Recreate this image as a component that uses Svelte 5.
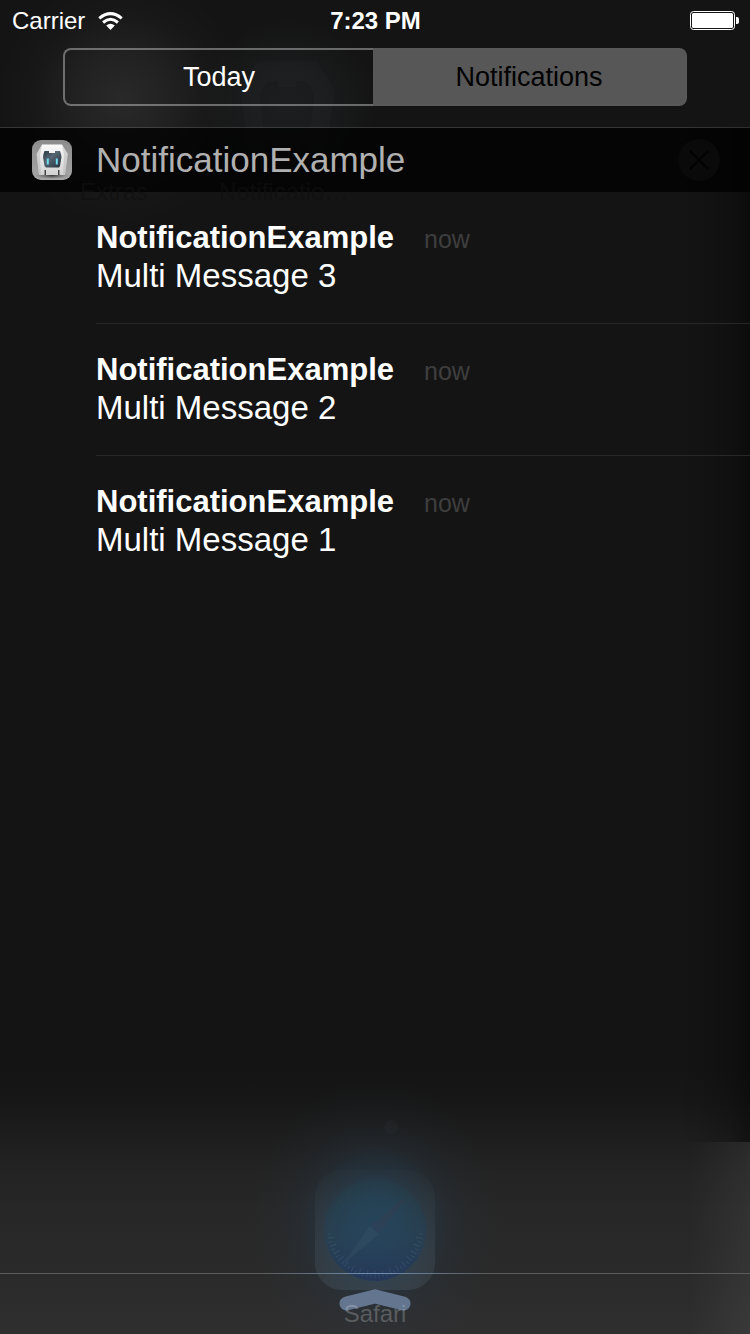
<script>
  let tab = $state('notifications');
  const app = 'NotificationExample';
  let messages = $state(['Multi Message 3', 'Multi Message 2', 'Multi Message 1']);
  const ticks = Array.from({ length: 72 }, (_, i) => i * 5);
</script>

<div class="screen">
  <div class="wallpaper" aria-hidden="true">
    <svg class="ghost-app" viewBox="0 0 40 40">
      <path fill-rule="evenodd" d="M10 4.500h20L36 14 33 35h-6v-4h-2v4H15v-4h-2v4H7L4.500 14zM12 13l2-2h3v2h6v-2h3l2 2 1 3-1 10-2 2H14l-2-2-1-10z" />
    </svg>
    <div class="safari-glow"></div>
    <svg class="safari" viewBox="0 0 120 120">
      <defs>
        <linearGradient id="tile" x1="0" y1="0" x2="0" y2="1">
          <stop offset="0" stop-color="#fff" stop-opacity="0.01" />
          <stop offset="1" stop-color="#c8e6ff" stop-opacity="0.08" />
        </linearGradient>
        <linearGradient id="dial" x1="0" y1="0" x2="0" y2="1">
          <stop offset="0" stop-color="#1f4550" stop-opacity="0.2" />
          <stop offset="0.6" stop-color="#21405a" stop-opacity="0.5" />
          <stop offset="1" stop-color="#25385a" />
        </linearGradient>
      </defs>
      <rect width="120" height="120" rx="27" fill="url(#tile)" />
      <circle cx="60" cy="60" r="51" fill="url(#dial)" />
      <g stroke="#7fa3c0">
        {#each ticks as angle, i}
          <path d={i % 2 ? 'M60 104v4' : 'M60 101v7'} stroke-opacity={angle < 90 || angle > 270 ? 0.15 : 0.03} transform="rotate({angle} 60 60)" />
        {/each}
      </g>
      <path d="M26 96L55 56l9 8z" fill="#7b9aa5" fill-opacity="0.08" />
      <path d="M94 24L55 56l9 8z" fill="#5b3048" fill-opacity="0.13" />
    </svg>
  </div>

  <header class="status">
    <div class="carrier">
      <span>Carrier</span>
      <svg width="25" height="18" viewBox="0 0 25 18" aria-label="Wi-Fi">
        <path d="M1.3 6.3Q12.5-3.1 23.7 6.3" fill="none" stroke="#fff" stroke-width="3" />
        <path d="M5.1 10.5Q12.5 4.1 19.9 10.5" fill="none" stroke="#fff" stroke-width="3" />
        <path d="M8.2 13.5Q12.5 9.8 16.8 13.5L12.5 18z" fill="#fff" />
      </svg>
    </div>
    <time>7:23 PM</time>
    <svg class="battery" width="49" height="19" viewBox="0 0 49 19" aria-label="Battery full">
      <rect x="0.5" y="0.5" width="44" height="18" rx="3" fill="none" stroke="#fff" />
      <rect x="2" y="2" width="41" height="15" rx="1.5" fill="#fff" />
      <path d="M46 6h1q2 0 2 2v3q0 2-2 2h-1z" fill="#fff" />
    </svg>
  </header>

  <nav class="tabs">
    <button class:active={tab === 'today'} onclick={() => (tab = 'today')}>Today</button>
    <button class:active={tab === 'notifications'} onclick={() => (tab = 'notifications')}>Notifications</button>
  </nav>

  <main>
    <div class="group">
      <svg class="app-icon" viewBox="0 0 40 40" aria-hidden="true">
        <defs>
          <linearGradient id="plate" x1="0" y1="0" x2="0" y2="1">
            <stop offset="0" stop-color="#8c8c8c" />
            <stop offset="1" stop-color="#a6a6a6" />
          </linearGradient>
          <linearGradient id="shell" x1="0" y1="0" x2="0" y2="1">
            <stop offset="0" stop-color="#fafafa" />
            <stop offset="1" stop-color="#d2d2d2" />
          </linearGradient>
          <linearGradient id="face" x1="0" y1="0" x2="1" y2="1">
            <stop offset="0" stop-color="#2b3944" />
            <stop offset="0.4" stop-color="#566672" />
            <stop offset="1" stop-color="#22303b" />
          </linearGradient>
          <radialGradient id="shade"><stop offset="0" stop-color="#222" stop-opacity="0.8" /><stop offset="1" stop-color="#444" stop-opacity="0" /></radialGradient>
        </defs>
        <rect width="40" height="40" rx="9" fill="url(#plate)" />
        <ellipse cx="20" cy="35.5" rx="17" ry="3.5" fill="url(#shade)" />
        <path d="M10 4.500h20L35.700 14 33 35H7L4.700 14z" fill="url(#shell)" />
        <path d="M10 4.500L4.700 14 7 35h2L8 15zM30 4.500L35.700 14 33 35h-2l1-20z" fill="#b4b4b4" fill-opacity="0.5" />
        <path d="M12.500 11h4.500v2h6v-2h5l1 3 .5 3-1.500 9-1 1.500H14L12.500 26 11 17l.5-3z" fill="url(#face)" />
        <path d="M14.800 18.500h2v6h-2zM23.800 18.500h2v6h-2z" fill="#70dcf0" />
        <path d="M12.500 30H14v5h-1.500zM26 30h1.500v5H26z" fill="#444" />
      </svg>
      <h1>{app}</h1>
      <button class="clear" aria-label="Clear notifications" onclick={() => (messages = [])}>
        <svg viewBox="0 0 42 42"><path d="M12.500 12.500l17 17M29.500 12.500l-17 17" stroke="#020202" stroke-width="2" stroke-linecap="round" /></svg>
      </button>
    </div>
    <ul>
      {#each messages as message}
        <li>
          <div class="title"><strong>{app}</strong><span>now</span></div>
          <p>{message}</p>
        </li>
      {/each}
    </ul>
  </main>

  <footer>
    <button aria-label="Close notification center">
      <svg width="72" height="22" viewBox="0 0 72 22"><path d="M7.500 14.500L36 7.500l28.500 7" fill="none" stroke="#64758f" stroke-width="14" stroke-linecap="round" /></svg>
    </button>
  </footer>

  <div class="labels" aria-hidden="true">
    <span class="ghost extras">Extras</span>
    <span class="ghost example">Notificatio…</span>
    <span class="safari-label">Safari</span>
  </div>
</div>

<style>
  :global(body) { background: #141414; }
  .screen {
    position: relative;
    display: flex;
    flex-direction: column;
    min-height: 100vh;
    overflow: hidden;
    isolation: isolate;
    box-sizing: border-box;
    color: #fff;
    font-family: "Liberation Sans", Arial, sans-serif;
  }
  button { font: inherit; cursor: pointer; }
  .wallpaper {
    position: absolute;
    inset: 0;
    z-index: -1;
    background:
      radial-gradient(circle 7px at calc(50% + 16px) calc(100% - 207px), rgba(150,170,180,.03) 95%, transparent),
      radial-gradient(circle at 122px 100px, rgba(255,255,255,.09), rgba(255,255,255,.055) 50px, rgba(255,255,255,.015) 90px, transparent 125px),
      radial-gradient(circle at 288px 108px, rgba(180,215,235,.05), rgba(180,215,235,.035) 40px, transparent 90px),
      linear-gradient(to left, rgba(255,255,255,.05), transparent 60px) bottom / 100% 192px no-repeat,
      linear-gradient(to left, rgba(0,0,0,.4), rgba(0,0,0,.2) 20px, rgba(0,0,0,.06) 50px, transparent 75px) 0 calc(100% - 192px) / 100% 1015px no-repeat,
      linear-gradient(to top, #302f30, #2a2a2a 61px, #272727 124px, #232323 164px, #1d1d1d 200px, #171717 232px, #141414 264px);
    background-position: 0 0, 0 0, 0 0, 0 100%, 0 127px, 0 0;
  }
  .ghost-app {
    position: absolute;
    left: 227px;
    top: 48px;
    width: 120px;
    height: 120px;
    fill: rgba(200,225,240,.018);
  }
  .safari-glow {
    position: absolute;
    left: 50%;
    bottom: 0;
    width: 300px;
    height: 270px;
    transform: translateX(-50%);
    background:
      radial-gradient(ellipse 96px 105px at 50% 162px, rgba(32,66,93,.8), rgba(33,65,90,.7) 25%, rgba(35,61,82,.4) 50%, rgba(37,56,72,.13) 75%, transparent),
      radial-gradient(ellipse 125px 145px at 50% 160px, rgba(38,66,84,.4), rgba(40,58,76,.13) 65%, transparent);
  }
  .safari {
    position: absolute;
    left: 50%;
    bottom: 44px;
    width: 120px;
    height: 120px;
    transform: translateX(-50%);
  }
  .status {
    display: grid;
    grid-template-columns: 1fr auto 1fr;
    align-items: center;
    height: 41px;
    padding: 0 11px 0 12px;
    font-size: 24px;
    line-height: 40px;
  }
  .carrier { display: flex; align-items: center; gap: 13px; }
  time { font-weight: 700; }
  .battery { justify-self: end; }
  .tabs {
    display: grid;
    grid-template-columns: 1fr 1fr;
    padding: 7px 63px 21px;
    border-bottom: 1px solid rgba(255,255,255,.14);
  }
  .tabs button {
    height: 58px;
    padding: 0;
    border: 2px solid rgba(255,255,255,.36);
    background: none;
    color: #fff;
    font-size: 27px;
  }
  .tabs button:first-child { border-radius: 8px 0 0 8px; border-right: 0; margin-right: 2px; }
  .tabs button:last-child { border-radius: 0 8px 8px 0; border-left: 0; margin-left: -2px; }
  .tabs button.active { border-color: #595959; background: #575757; color: #000; }
  main { flex: 1; }
  .group {
    display: flex;
    align-items: center;
    gap: 24px;
    height: 64px;
    padding: 0 30px 0 32px;
    background: rgba(0,0,0,.75);
  }
  .app-icon { width: 40px; height: 40px; }
  h1 { flex: 1; margin: 0; font-size: 35px; font-weight: 400; line-height: 40px; color: #b0b0b0; }
  .clear {
    width: 42px;
    height: 42px;
    padding: 0;
    border: 0;
    border-radius: 50%;
    background: #0a0a0a;
  }
  .clear svg { display: block; }
  ul { margin: 0; padding: 0 0 0 96px; list-style: none; }
  li {
    box-sizing: border-box;
    height: 132px;
    padding-top: 27px;
    border-bottom: 1px solid #272727;
    line-height: 38px;
  }
  li:last-child { border-bottom: 0; }
  .title { display: flex; align-items: baseline; gap: 30px; height: 38px; }
  strong { font-size: 31px; }
  .title span { font-size: 25px; color: #3e3e3e; }
  p { margin: 0; font-size: 33px; }
  footer {
    display: flex;
    justify-content: center;
    height: 61px;
    background: radial-gradient(ellipse 110px 60px at 50% 0, #6f91b8, #5d6066 90%, #5c5c5c) top / 100% 1px no-repeat;
  }
  footer button { height: 38px; padding: 16px 0 0; border: 0; background: none; }
  footer svg { display: block; }
  .labels { position: absolute; inset: 0; pointer-events: none; font-size: 24px; line-height: 28px; }
  .labels span { position: absolute; }
  .ghost { top: 178px; color: rgba(16,16,16,.7); }
  .extras { left: 80px; }
  .example { left: 219px; }
  .safari-label { left: 50%; bottom: 6px; transform: translateX(-50%); color: rgba(255,255,255,.22); }
</style>
